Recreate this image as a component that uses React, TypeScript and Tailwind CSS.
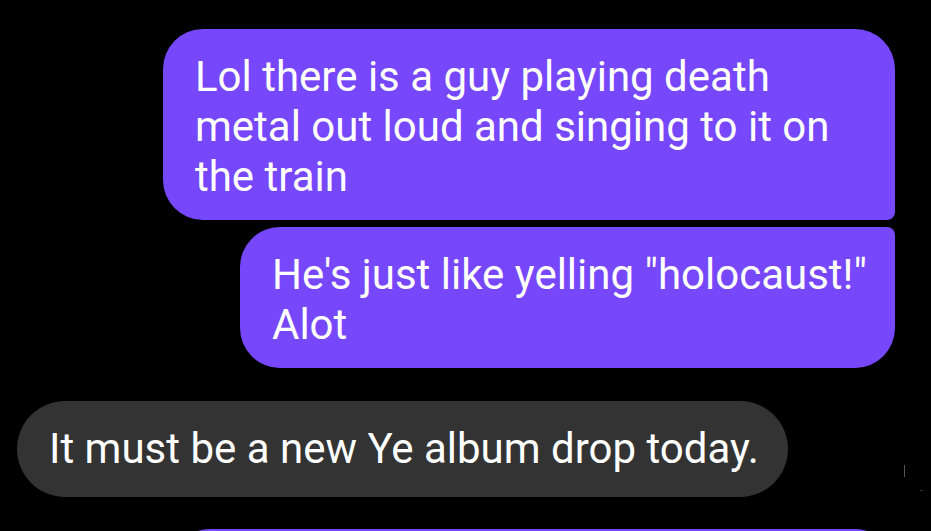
import React from "react";

interface Message {
  id: number;
  lines: string[];
  mine: boolean;
  widthClass: string;
  shapeClass: string;
  padClass: string;
}

const messages: Message[] = [
  {
    id: 1,
    lines: ["Lol there is a guy playing death", "metal out loud and singing to it on", "the train"],
    mine: true,
    widthClass: "w-[732px]",
    shapeClass: "rounded-tl-[40px] rounded-tr-[40px] rounded-bl-[40px] rounded-br-[8px]",
    padClass: "pt-[23px] pb-[18px]",
  },
  {
    id: 2,
    lines: ['He\'s just like yelling "holocaust!"', "Alot"],
    mine: true,
    widthClass: "w-[655px]",
    shapeClass: "rounded-tl-[40px] rounded-tr-[8px] rounded-bl-[40px] rounded-br-[40px]",
    padClass: "pt-[23px] pb-[18px]",
  },
  {
    id: 3,
    lines: ["It must be a new Ye album drop today."],
    mine: false,
    widthClass: "w-[771px]",
    shapeClass: "rounded-[48px]",
    padClass: "pt-[23px] pb-[23px]",
  },
];

export default function App() {
  return (
    <div
      className="relative h-[531px] w-[931px] overflow-hidden bg-black pt-[29px]"
      style={{ fontFamily: "Roboto, 'Noto Sans', sans-serif" }}
    >
      <div className="flex flex-col">
        {messages.map((m, i) => (
          <div
            key={m.id}
            className={
              (m.mine ? "flex justify-end pr-[36px]" : "flex justify-start pl-[17px]") +
              " " +
              (i === 0 ? "" : i === 1 ? "mt-[7px]" : "mt-[33px]")
            }
          >
            <div
              className={`${m.widthClass} ${m.shapeClass} ${m.padClass} ${
                m.mine ? "bg-[#7647fb]" : "bg-[#333333]"
              } pl-[32px] pr-[24px] text-[42px] leading-[50px] text-white`}
            >
              {m.lines.map((l, j) => (
                <div key={j} className="whitespace-nowrap">
                  {l}
                </div>
              ))}
            </div>
          </div>
        ))}

        <div className="mt-[32px] flex justify-end pr-[36px]">
          <div className="h-[120px] w-[725px] rounded-[40px] bg-[#7647fb]" />
        </div>
      </div>

      {/* scrollbar remnants */}
      <div className="absolute left-[904px] top-[465px] h-[12px] w-px bg-[#555555]" />
      <div className="absolute left-[920px] top-[490px] h-px w-[3px] bg-[#333333]" />
    </div>
  );
}
